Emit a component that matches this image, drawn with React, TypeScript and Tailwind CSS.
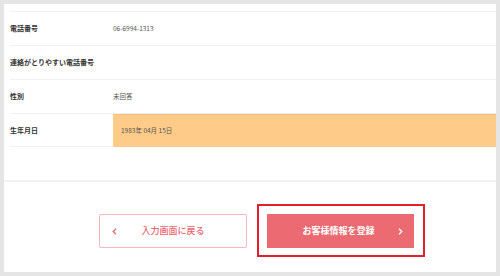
import React from "react";

const rows = [
  { label: "電話番号", value: "06-6994-1313" },
  { label: "連絡がとりやすい電話番号", value: "" },
  { label: "性別", value: "未回答" },
];

function Chevron({ dir, className }: { dir: "left" | "right"; className?: string }) {
  return (
    <svg width="5" height="7" viewBox="0 0 5 7" className={className}>
      <path
        d={dir === "left" ? "M4 0.8 L1.2 3.5 L4 6.2" : "M1 0.8 L3.8 3.5 L1 6.2"}
        fill="none"
        stroke="currentColor"
        strokeWidth="1.3"
      />
    </svg>
  );
}

export default function App() {
  return (
    <div
      className="w-[500px] h-[276px] bg-[#e5e5e5] p-[4px]"
      style={{ fontFamily: '"Noto Sans CJK JP", "Noto Sans", sans-serif' }}
    >
      <div className="h-full bg-white flex flex-col">
        <div className="pt-[7px] pl-[6px]">
          <div className="border-t border-[#f0f0f0]">
            {rows.map((r) => (
              <div key={r.label} className="flex h-[34px] border-b border-[#f0f0f0]">
                <div className="w-[103px] flex items-center text-[7px] font-bold text-[#333]">
                  {r.label}
                </div>
                <div className="flex-1 flex items-center text-[6.5px] text-[#555]">{r.value}</div>
              </div>
            ))}
            <div className="flex h-[33px]">
              <div className="w-[103px] flex items-center text-[7px] font-bold text-[#333] border-b border-[#f0f0f0]">
                生年月日
              </div>
              <div className="flex-1 flex items-center pl-[8px] bg-[#fecb89] border-t border-[#f7c07a] text-[6.5px] text-[#555]">
                1983年 04月 15日
              </div>
            </div>
          </div>
        </div>

        <div className="mt-[33px] border-t-2 border-[#f0f0f0] pt-[22px] pl-[95px] flex items-start gap-[10px]">
          <button className="mt-[10px] w-[148px] h-[34px] border border-[#f7b8bd] rounded-[2px] relative flex items-center justify-center text-[9px] font-medium text-[#e8646e]">
            <Chevron dir="left" className="absolute left-[12px]" />
            入力画面に戻る
          </button>
          <div className="w-[168px] h-[53px] border-2 border-[#e31f2b] pt-[8px] pl-[8px]">
            <button className="w-[147px] h-[34px] bg-[#ec6a72] relative flex items-center justify-center text-[9px] font-bold text-white">
              <span className="-ml-[4px]">お客様情報を登録</span>
              <Chevron dir="right" className="absolute right-[11px]" />
            </button>
          </div>
        </div>
      </div>
    </div>
  );
}
